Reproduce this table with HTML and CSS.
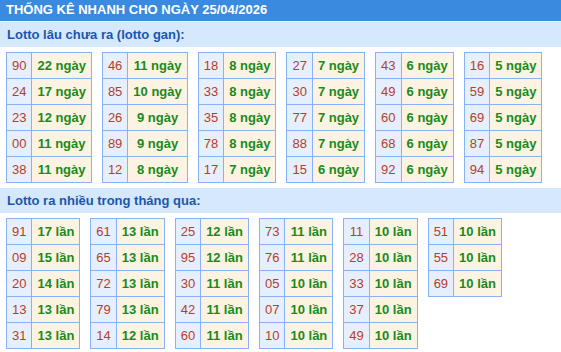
FILE: index.html
```html
<!DOCTYPE html>
<html lang="vi">
<head>
<meta charset="utf-8">
<title>Thống kê nhanh</title>
<link rel="stylesheet" href="styles.css">
</head>
<body>
<div class="title">THỐNG KÊ NHANH CHO NGÀY 25/04/2026</div>

<div class="band">Lotto lâu chưa ra (lotto gan):</div>
<div class="tables">
  <table class="lt"><tr><td class="n">90</td><td class="c">22 ngày</td></tr><tr><td class="n">24</td><td class="c">17 ngày</td></tr><tr><td class="n">23</td><td class="c">12 ngày</td></tr><tr><td class="n">00</td><td class="c">11 ngày</td></tr><tr><td class="n">38</td><td class="c">11 ngày</td></tr></table>
  <table class="lt"><tr><td class="n">46</td><td class="c">11 ngày</td></tr><tr><td class="n">85</td><td class="c">10 ngày</td></tr><tr><td class="n">26</td><td class="c">9 ngày</td></tr><tr><td class="n">89</td><td class="c">9 ngày</td></tr><tr><td class="n">12</td><td class="c">8 ngày</td></tr></table>
  <table class="lt"><tr><td class="n">18</td><td class="c">8 ngày</td></tr><tr><td class="n">33</td><td class="c">8 ngày</td></tr><tr><td class="n">35</td><td class="c">8 ngày</td></tr><tr><td class="n">78</td><td class="c">8 ngày</td></tr><tr><td class="n">17</td><td class="c">7 ngày</td></tr></table>
  <table class="lt"><tr><td class="n">27</td><td class="c">7 ngày</td></tr><tr><td class="n">30</td><td class="c">7 ngày</td></tr><tr><td class="n">77</td><td class="c">7 ngày</td></tr><tr><td class="n">88</td><td class="c">7 ngày</td></tr><tr><td class="n">15</td><td class="c">6 ngày</td></tr></table>
  <table class="lt"><tr><td class="n">43</td><td class="c">6 ngày</td></tr><tr><td class="n">49</td><td class="c">6 ngày</td></tr><tr><td class="n">60</td><td class="c">6 ngày</td></tr><tr><td class="n">68</td><td class="c">6 ngày</td></tr><tr><td class="n">92</td><td class="c">6 ngày</td></tr></table>
  <table class="lt"><tr><td class="n">16</td><td class="c">5 ngày</td></tr><tr><td class="n">59</td><td class="c">5 ngày</td></tr><tr><td class="n">69</td><td class="c">5 ngày</td></tr><tr><td class="n">87</td><td class="c">5 ngày</td></tr><tr><td class="n">94</td><td class="c">5 ngày</td></tr></table>
</div>

<div class="band band2">Lotto ra nhiều trong tháng qua:</div>
<div class="tables tables2">
  <table class="lt"><tr><td class="n">91</td><td class="c">17 lần</td></tr><tr><td class="n">09</td><td class="c">15 lần</td></tr><tr><td class="n">20</td><td class="c">14 lần</td></tr><tr><td class="n">13</td><td class="c">13 lần</td></tr><tr><td class="n">31</td><td class="c">13 lần</td></tr></table>
  <table class="lt"><tr><td class="n">61</td><td class="c">13 lần</td></tr><tr><td class="n">65</td><td class="c">13 lần</td></tr><tr><td class="n">72</td><td class="c">13 lần</td></tr><tr><td class="n">79</td><td class="c">13 lần</td></tr><tr><td class="n">14</td><td class="c">12 lần</td></tr></table>
  <table class="lt"><tr><td class="n">25</td><td class="c">12 lần</td></tr><tr><td class="n">95</td><td class="c">12 lần</td></tr><tr><td class="n">30</td><td class="c">11 lần</td></tr><tr><td class="n">42</td><td class="c">11 lần</td></tr><tr><td class="n">60</td><td class="c">11 lần</td></tr></table>
  <table class="lt"><tr><td class="n">73</td><td class="c">11 lần</td></tr><tr><td class="n">76</td><td class="c">11 lần</td></tr><tr><td class="n">05</td><td class="c">10 lần</td></tr><tr><td class="n">07</td><td class="c">10 lần</td></tr><tr><td class="n">10</td><td class="c">10 lần</td></tr></table>
  <table class="lt"><tr><td class="n">11</td><td class="c">10 lần</td></tr><tr><td class="n">28</td><td class="c">10 lần</td></tr><tr><td class="n">33</td><td class="c">10 lần</td></tr><tr><td class="n">37</td><td class="c">10 lần</td></tr><tr><td class="n">49</td><td class="c">10 lần</td></tr></table>
  <table class="lt"><tr><td class="n">51</td><td class="c">10 lần</td></tr><tr><td class="n">55</td><td class="c">10 lần</td></tr><tr><td class="n">69</td><td class="c">10 lần</td></tr></table>
</div>
</body>
</html>
```
FILE: styles.css
```css
html, body {
  margin: 0;
  padding: 0;
  background: #ffffff;
  font-family: "Liberation Sans", Arial, sans-serif;
  font-size: 13px;
}

.title {
  height: 21px;
  line-height: 19px;
  padding-left: 6px;
  background: #3a8be0;
  color: #ffffff;
  font-weight: bold;
  white-space: nowrap;
}

.band {
  margin-top: 1px;
  height: 25px;
  line-height: 25px;
  padding-left: 7px;
  background: #d5e8fc;
  color: #1a56b0;
  font-weight: bold;
}

.band2 {
  margin-top: 5px;
}

.tables {
  display: flex;
  align-items: flex-start;
  gap: 10px;
  padding: 5px 0 0 6px;
}

.lt {
  border-collapse: collapse;
  flex: none;
}

.lt td {
  height: 25px;
  padding: 0 5px;
  border: 1px solid #89b1f5;
  text-align: center;
  white-space: nowrap;
}

.lt .n {
  background: #e5effd;
  color: #b5401f;
}

.lt .c {
  background: #fdf3e3;
  color: #1a8a1a;
  font-weight: bold;
}
```
